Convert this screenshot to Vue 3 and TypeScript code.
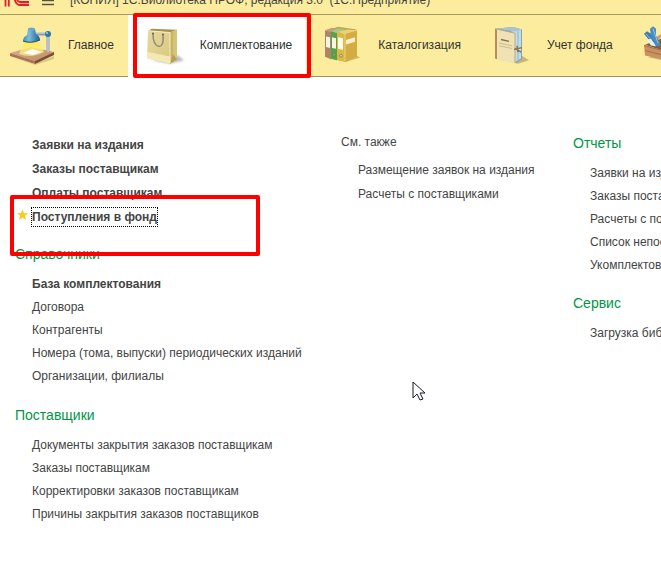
<script setup lang="ts">
interface Tab {
  id: string
  label: string
}

interface Group {
  title?: string
  lead?: boolean
  items: { label: string; bold?: boolean; starred?: boolean }[]
}

const tabs: Tab[] = [
  { id: 'lamp', label: 'Главное' },
  { id: 'bag', label: 'Комплектование' },
  { id: 'binders', label: 'Каталогизация' },
  { id: 'book', label: 'Учет фонда' },
  { id: 'toolbox', label: 'Администрирование' },
]
const activeTab = 'bag'

const mainGroups: Group[] = [
  {
    lead: true,
    items: [
      { label: 'Заявки на издания', bold: true },
      { label: 'Заказы поставщикам', bold: true },
      { label: 'Оплаты поставщикам', bold: true },
      { label: 'Поступления в фонд', bold: true, starred: true },
    ],
  },
  {
    title: 'Справочники',
    items: [
      { label: 'База комплектования', bold: true },
      { label: 'Договора' },
      { label: 'Контрагенты' },
      { label: 'Номера (тома, выпуски) периодических изданий' },
      { label: 'Организации, филиалы' },
    ],
  },
  {
    title: 'Поставщики',
    items: [
      { label: 'Документы закрытия заказов поставщикам' },
      { label: 'Заказы поставщикам' },
      { label: 'Корректировки заказов поставщикам' },
      { label: 'Причины закрытия заказов поставщиков' },
    ],
  },
]

const seeAlso: string[] = ['Размещение заявок на издания', 'Расчеты с поставщиками']

const serviceGroups: Group[] = [
  {
    title: 'Отчеты',
    items: [
      { label: 'Заявки на издания' },
      { label: 'Заказы поставщикам' },
      { label: 'Расчеты с поставщиками' },
      { label: 'Список непоставленных изданий' },
      { label: 'Укомплектованность фонда' },
    ],
  },
  { title: 'Сервис', items: [{ label: 'Загрузка библиотечных данных' }] },
]
</script>

<template>
  <div class="app">
    <header class="titlebar">
      <svg class="logo" viewBox="0 0 26 18" aria-hidden="true">
        <g fill="none" stroke="#e0202c" stroke-width="1.8">
          <path d="M1.500 3v14.500M4.800 1v16.500" />
          <path d="M23 5a7 7 0 1 0-8 11h10" />
          <path d="M20 7a4 4 0 1 0-4 6h9" />
        </g>
        <path d="M16 14.500h9" stroke="#f3a070" />
      </svg>
      <svg class="burger" viewBox="0 0 12 12" aria-hidden="true">
        <path d="M0 1.500h12M0 5.500h12M0 9.500h12" stroke="#55533f" stroke-width="1.500" />
      </svg>
      <span class="app-title">[КОПИЯ] 1С:Библиотека ПРОФ, редакция 3.0&nbsp; (1С:Предприятие)</span>
    </header>

    <nav class="tabs">
      <button
        v-for="tab in tabs"
        :key="tab.id"
        type="button"
        class="tab"
        :class="{ active: tab.id === activeTab }"
      >
        <svg v-if="tab.id === 'lamp'" class="tab-icon" viewBox="0 0 48 48" aria-hidden="true">
          <defs>
            <linearGradient id="wood" x1="0" y1="0" x2="1" y2="1">
              <stop offset="0" stop-color="#dcb088" /><stop offset="1" stop-color="#c08c64" />
            </linearGradient>
            <linearGradient id="beam" x1="0" y1="0" x2="0" y2="1">
              <stop offset="0" stop-color="#ffe640" /><stop offset="1" stop-color="#fff7a0" stop-opacity=".6" />
            </linearGradient>
            <linearGradient id="shade" x1="0" y1="0" x2="1" y2="0">
              <stop offset="0" stop-color="#3f8cb8" /><stop offset=".35" stop-color="#7dbedb" /><stop offset="1" stop-color="#1d618d" />
            </linearGradient>
          </defs>
          <path d="M2 35l24 8 20-8v3l-19 6z" fill="#8e7441" opacity=".3" />
          <path d="M2 32l21-6 23 5-19 9z" fill="url(#wood)" />
          <path d="M2 32l25 8v3L2 35z" fill="#a8745a" />
          <path d="M27 40l19-9v3l-19 9z" fill="#7d4c38" />
          <path d="M17 20L11 33q12 5 25-2L29 19z" fill="url(#beam)" />
          <path d="M15 32l9-4 10 3-9 3z" fill="#fffef4" />
          <path d="M28 13h12v18" fill="none" stroke="#8d9bb0" stroke-width="3" />
          <path d="M28 12h12M40 13v18" fill="none" stroke="#dae4ee" stroke-width="1" />
          <path d="M20 8h7l1 5q4 2 4 6-8 4-17 1 0-4 4-6z" fill="url(#shade)" />
          <ellipse cx="23.500" cy="8" rx="3.500" ry="1.500" fill="#69abd0" />
          <path d="M15 20q8 3 17-1" fill="none" stroke="#164f7d" />
          <circle cx="40" cy="13" r="3" fill="#2f78aa" /><circle cx="39" cy="12" r="1" fill="#9fd0e8" />
        </svg>

        <svg v-else-if="tab.id === 'bag'" class="tab-icon" viewBox="0 0 48 48" aria-hidden="true">
          <defs>
            <linearGradient id="paper" x1="0" y1="0" x2="1" y2="1">
              <stop offset="0" stop-color="#e8da9c" /><stop offset="1" stop-color="#d9c77c" />
            </linearGradient>
            <filter id="soft"><feGaussianBlur stdDeviation="1" /></filter>
          </defs>
          <g transform="translate(0 .5) scale(1 .92)">
            <path d="M12 42l18 4 14-4-6-5z" fill="#777" opacity=".5" filter="url(#soft)" />
            <path d="M8 10l4-2 25 1-7 3z" fill="#a8924c" />
            <path d="M8 10l22 2v34L7 40z" fill="url(#paper)" />
            <path d="M30 12l7-3v32l-7 5z" fill="#c9b466" />
            <path d="M33 11v25l4 5V9z" fill="#d6c37a" />
            <path d="M30 46l3-10 4 5z" fill="#b89f55" />
            <path d="M7 33l23 5v8L7 40z" fill="#f3e8b6" />
            <path d="M8 10l22 2v33" fill="none" stroke="#f5ecc2" />
            <path d="M13 13q0 13 6 14 5 0 4-13" fill="none" stroke="#8d8b86" stroke-width="1.500" />
            <circle cx="13" cy="13" r="1" fill="#626262" /><circle cx="23" cy="14" r="1" fill="#626262" />
          </g>
        </svg>

        <svg v-else-if="tab.id === 'binders'" class="tab-icon" viewBox="0 0 48 48" aria-hidden="true">
          <g transform="translate(0 .5) scale(1 .88)">
            <path d="M10 42l18 4 14-5-6-4z" fill="#867531" opacity=".4" />
            <path d="M7 11l13-5 19 3-20 5z" fill="#b8a85a" />
            <path d="M7 10l6 2v31l-6-3z" fill="#b08468" />
            <path d="M7 10l7-3 6 1-7 4z" fill="#c99b78" />
            <path d="M13 11l6 2v31l-6-2z" fill="#54a348" />
            <path d="M13 11l7-3 7 1-8 4z" fill="#a5c98c" />
            <path d="M19 12l8 2v32l-8-3z" fill="#dfb744" />
            <path d="M27 14l12-4v30l-12 6z" fill="#d4ac44" />
            <path d="M19 12l10-3 10 1-12 4z" fill="#ecd372" />
            <path d="M8 17l4 1v12l-4-1zM14 18l4 1v12l-4-1z" fill="#f8f4e4" />
            <path d="M20 18l5 1v13l-5-1z" fill="#fffbe6" />
            <path d="M28 21l9-3v5l-9 3z" fill="#f8efca" />
            <g fill="#eadaac" stroke="#85703c" stroke-width=".8"><circle cx="10" cy="36" r="1" /><circle cx="16" cy="38" r="1" /><circle cx="23" cy="39" r="1.500" /></g>
            <path d="M27 14v31" stroke="#ecd484" />
          </g>
        </svg>

        <svg v-else-if="tab.id === 'book'" class="tab-icon" viewBox="0 0 48 48" aria-hidden="true">
          <g transform="translate(0 .5) scale(1 .9)">
            <path d="M12 42l19 5 11-4-7-5z" fill="#806c2d" opacity=".4" />
            <path d="M9 8l17-2 9 3v33l-6 4z" fill="#7fa5b8" />
            <path d="M24 11l10-2v32l-6 4z" fill="#c3dce8" />
            <path d="M31 10v33" stroke="#8bb5ca" />
            <path d="M9 8l17-2 9 3-7 2z" fill="#a8c4d0" />
            <path d="M8 8l20 5v34L8 41z" fill="#f0e2b4" />
            <path d="M8 8l2 1v33l-2-1z" fill="#b68d58" />
            <path d="M8 8l20 5v33" fill="none" stroke="#bba678" />
            <path d="M14 20l8 2" stroke="#7f7350" stroke-width="1.500" />
            <path d="M12 24l13 3M12 27l13 3" stroke="#c9b98a" />
            <path d="M27 31l8-2M28 30l6 4M30 27l1 7" stroke="#8a7448" stroke-width="1.500" />
          </g>
        </svg>

        <svg v-else class="tab-icon" viewBox="0 0 48 48" aria-hidden="true">
          <g transform="translate(0 1) scale(1 .84)">
            <path d="M9 42l20 5 14-8-9-5z" fill="#665425" opacity=".35" />
            <path d="M6 27l16-7 22 7-18 8z" fill="#8a5a3c" />
            <path d="M17 18l6-4h13l6 12-4 2-6-10h-10l-4 5z" fill="#cf9c6c" />
            <path d="M5 14l3-3 4 3 7 14-3 2-7-10z" fill="#397fb3" />
            <path d="M7 14l9 13" stroke="#8dc0df" />
            <path d="M11 8l3-3 3 3v8l5 12-4 1-6-12z" fill="#4a8fbf" />
            <path d="M14 8l5 17" stroke="#9fcbe4" />
            <path d="M8 21l4-1 5 9-5-1z" fill="#e6f0f2" />
            <path d="M5 27l21 8v10L6 40z" fill="#c8925f" />
            <path d="M26 35l18-7v10l-18 7z" fill="#a06b44" />
            <path d="M5 28l21 7M6 34l20 6" stroke="#a36d48" />
          </g>
        </svg>
        <span>{{ tab.label }}</span>
      </button>
      <span class="callout callout-tab"></span>
    </nav>

    <main class="content">
      <div class="column">
        <section v-for="(group, i) in mainGroups" :key="i" class="group" :class="{ lead: group.lead }">
          <h2 v-if="group.title" class="heading">{{ group.title }}</h2>
          <ul class="links">
            <li v-for="item in group.items" :key="item.label" :class="{ bold: item.bold, starred: item.starred }">
              <svg v-if="item.starred" class="star" viewBox="0 0 12 12" aria-hidden="true">
                <path d="M6 0l1.700 4H12L8.600 6.800 10 11.500 6 8.800 2 11.500 3.400 6.800 0 4h4.300z" fill="#fcc91c" />
              </svg>
              <a href="#">{{ item.label }}</a>
              <span v-if="item.starred" class="callout callout-link"></span>
            </li>
          </ul>
        </section>
      </div>

      <section class="column see-also">
        <h2 class="subheading">См. также</h2>
        <ul class="links">
          <li v-for="label in seeAlso" :key="label"><a href="#">{{ label }}</a></li>
        </ul>
      </section>

      <div class="column side">
        <section v-for="group in serviceGroups" :key="group.title" class="group">
          <h2 class="heading">{{ group.title }}</h2>
          <ul class="links">
            <li v-for="item in group.items" :key="item.label"><a href="#">{{ item.label }}</a></li>
          </ul>
        </section>
      </div>

      <svg class="cursor" viewBox="0 0 13 20" aria-hidden="true">
        <path d="M1 1v16l4-4 3 6 3-1-3-6h5z" fill="#fff" stroke="#17172a" />
      </svg>
    </main>
  </div>
</template>

<style>
body {
  margin: 0;
  background: #fff;
}
</style>

<style scoped>
.app {
  position: relative;
  min-height: 100vh;
  overflow: hidden;
  font-family: "Liberation Sans", Arial, sans-serif;
  font-size: 12px;
  color: #444;
}

.titlebar {
  display: flex;
  align-items: flex-end;
  height: 14px;
  overflow: hidden;
  box-sizing: border-box;
  padding: 0 4px 7px;
  background: #fbec9e;
}

.logo {
  flex: none;
  width: 26px;
  height: 18px;
  margin-right: 12px;
}

.burger {
  flex: none;
  width: 12px;
  height: 12px;
  margin-right: 16px;
}

.app-title {
  line-height: 14px;
  white-space: nowrap;
}

.tabs {
  position: relative;
  display: flex;
  height: 62px;
  padding-right: 12px;
  border-top: 1px solid #a79c66;
  background: #fbec9e;
  box-shadow: inset 0 -1px #9c925f;
}

.tab {
  display: flex;
  flex: none;
  align-items: center;
  gap: 12px;
  padding: 0 14px 2px 12px;
  border: 0;
  background: none;
  color: #333;
  font: inherit;
  white-space: nowrap;
}

.tab:first-child {
  padding-left: 8px;
}

.tab.active {
  background: #fff;
}

.tab-icon {
  width: 48px;
  height: 48px;
}

.callout {
  position: absolute;
  z-index: 1;
  box-sizing: border-box;
  border: 4px solid #f00;
  border-radius: 2px;
  pointer-events: none;
}

.callout-tab {
  top: -2px;
  left: 133px;
  width: 178px;
  height: 65px;
}

.callout-link {
  top: -10px;
  left: -5px;
  width: 250px;
  height: 61px;
}

.content {
  position: relative;
  display: grid;
  grid-template-columns: 326px 232px 1fr;
  padding: 56px 0 40px 15px;
}

.column {
  min-width: 0;
  white-space: nowrap;
}

.see-also {
  padding-top: 1px;
}

.group + .group {
  margin-top: 18px;
}

.side .group + .group {
  margin-top: 17px;
}

.lead + .group {
  margin-top: 15px;
}

.heading,
.subheading {
  margin: 0;
  font-weight: 400;
}

.heading {
  margin-bottom: 8px;
  font-size: 14px;
  line-height: 20px;
  color: #009646;
}

.subheading {
  margin-bottom: 8px;
  font-size: 12px;
  line-height: 16px;
}

.links {
  margin: 0;
  padding: 0;
  list-style: none;
}

.links li {
  position: relative;
  display: flex;
  align-items: center;
  height: 23px;
  padding-left: 17px;
}

.lead li,
.see-also li {
  height: 24px;
}

.links a {
  line-height: 18px;
  color: inherit;
  text-decoration: none;
}

.bold {
  font-weight: 700;
}

.starred a {
  outline: 1px dotted #000;
}

.star {
  position: absolute;
  top: 4px;
  left: 2px;
  width: 11px;
  height: 12px;
}

.cursor {
  position: absolute;
  top: 304px;
  left: 412px;
  width: 13px;
  height: 20px;
}
</style>
